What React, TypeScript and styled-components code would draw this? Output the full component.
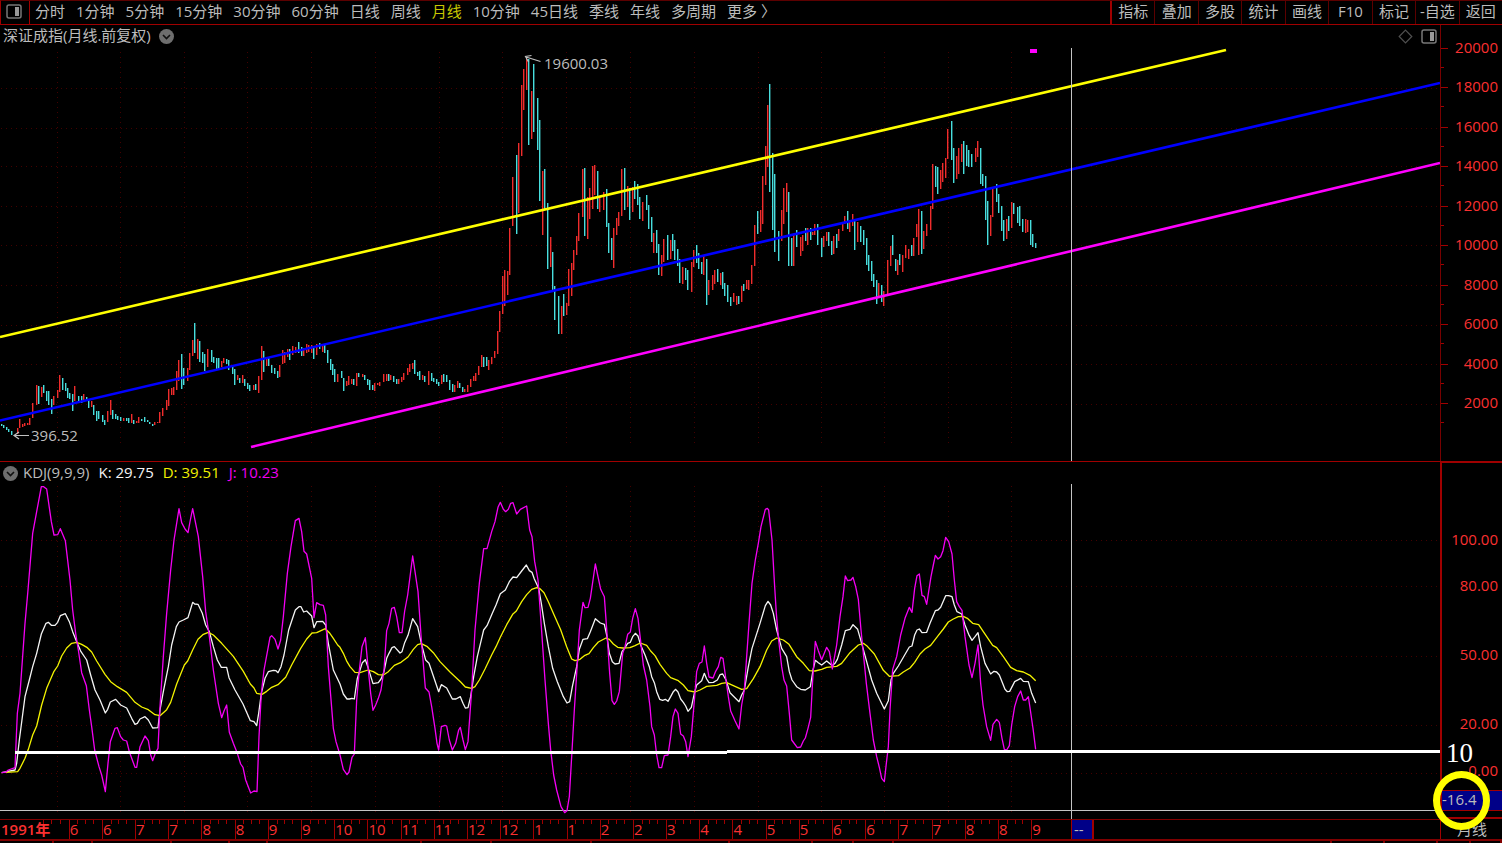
import React from "react";
import styled, { createGlobalStyle } from "styled-components";

const GlobalStyle = createGlobalStyle`
  * { box-sizing: border-box; }
  body {
    margin: 0;
    background: #000;
    color: #bcbcbc;
    font: 15px/20px "Open Sans", "Noto Sans CJK SC", sans-serif;
  }
`;

const palette = {
  edge: "#a00000",
  edgeDim: "#5c0000",
  grid: "#440000",
  scale: "#fa3030",
  muted: "#bcbcbc",
  yellow: "#ffff00",
  blue: "#0000ff",
  magenta: "#ff00ff",
  tag: "#000088",
};

/* ---------- toolbar ---------- */

const Toolbar = styled.nav`
  display: flex;
  align-items: stretch;
  height: 25px;
  border-top: 1px solid ${palette.edgeDim};
  border-bottom: 1px solid ${palette.edge};
  border-left: 1px solid ${palette.edge};
`;

const LayoutButton = styled.button`
  display: flex;
  align-items: center;
  justify-content: center;
  width: 29px;
  padding: 0 3px 3px 0;
  border: 0;
  border-right: 1px solid ${palette.edge};
  background: none;
`;

const PeriodList = styled.div`
  display: flex;
  flex: 1;
  gap: 11px;
  padding-left: 5px;
`;

const PeriodButton = styled.button<{ $active?: boolean }>`
  padding: 0 0 3px;
  border: 0;
  background: none;
  color: ${(p) => (p.$active ? "#c8c800" : palette.muted)};
  font: inherit;
  white-space: nowrap;
`;

const ToolList = styled.div`
  display: grid;
  grid-template-columns: repeat(9, 1fr);
  width: 392px;
  border-left: 1px solid ${palette.edge};
`;

const ToolButton = styled.button`
  padding: 0 0 3px;
  border: 0;
  border-left: 1px solid ${palette.edgeDim};
  background: none;
  color: ${palette.muted};
  font: inherit;
  white-space: nowrap;
  &:first-child { border-left-color: ${palette.edge}; }
`;

/* ---------- chart panels ---------- */

const Panel = styled.section<{ $divided?: boolean }>`
  display: grid;
  grid-template-columns: minmax(0, 1fr) 62px;
  border-top: ${(p) => (p.$divided ? `1px solid ${palette.edge}` : "0")};
`;

const PanelHeader = styled.header<{ $tall?: boolean }>`
  display: flex;
  align-items: center;
  height: ${(p) => (p.$tall ? 23 : 22)}px;
  padding: 0 3px;
  white-space: nowrap;
`;

const PanelTitle = styled.h1`
  margin: 0 8px 0 0;
  padding-bottom: 3px;
  font: inherit;
`;

const IconButton = styled.button`
  display: flex;
  margin: 0;
  padding: 0;
  border: 0;
  background: none;
`;

const HeaderIcons = styled.div`
  display: flex;
  gap: 8px;
  margin-left: auto;
`;

const IndicatorLegend = styled.div`
  display: flex;
  gap: 9px;
  margin-left: 5px;
  padding-bottom: 3px;
`;

const Reading = styled.span<{ $color: string }>`
  color: ${(p) => p.$color};
`;

const Plot = styled.svg`
  display: block;
  width: 100%;
  height: auto;
`;

const PriceScale = styled.ol`
  display: grid;
  grid-auto-rows: 1fr;
  margin: 0;
  padding: 3px 0 38px;
  border-left: 1px solid #780000;
  list-style: none;
  color: ${palette.scale};
`;

const PriceMark = styled.li`
  display: flex;
  align-items: center;
  justify-content: space-between;
  padding-right: 4px;
  padding-bottom: 2px;
  background: linear-gradient(${palette.edge}, ${palette.edge}) 0 100% / 3px 1px no-repeat;
  &::before {
    content: "";
    width: 7px;
    height: 1px;
    margin-top: 3px;
    background: ${palette.edge};
  }
`;

const OscillatorScale = styled.ol`
  position: relative;
  display: grid;
  grid-template-rows: 46fr 46fr 94fr 44fr 50fr;
  margin: 0;
  padding: 53px 4px 22px 0;
  border-top: 1px solid ${palette.edge};
  border-left: 2px solid ${palette.edge};
  border-bottom: 2px solid ${palette.edge};
  list-style: none;
  color: ${palette.scale};
  text-align: right;
`;

const OscillatorMark = styled.li`
  display: flex;
  align-items: center;
  justify-content: flex-end;
`;

const LevelNote = styled.li`
  position: absolute;
  left: 4px;
  bottom: 49px;
  color: #fff;
  font: 27px/30px "Liberation Serif", serif;
`;

const CursorTag = styled.li`
  position: absolute;
  left: 0;
  right: 0;
  bottom: 6px;
  height: 21px;
  border: solid ${palette.edge};
  border-width: 1px 0;
  background: ${palette.tag};
  color: ${palette.muted};
  line-height: 17px;
  text-align: left;
`;

const Highlight = styled.li`
  position: absolute;
  left: -9px;
  bottom: -13px;
  z-index: 1;
  width: 57px;
  height: 59px;
  border: 7px solid ${palette.yellow};
  border-radius: 50%;
`;

/* ---------- time axis ---------- */

const TimeRow = styled.footer`
  display: grid;
  grid-template-columns: minmax(0, 1fr) 62px;
  height: 22px;
  border-bottom: 2px solid #800000;
`;

const TimeScale = styled.ol`
  display: grid;
  grid-template-columns: 207fr repeat(29, 100fr) 120fr 70fr 1042fr;
  margin: 0;
  padding: 0;
  border-top: 1px solid #800000;
  list-style: none;
  color: ${palette.scale};
  line-height: 18px;
`;

const tick = `linear-gradient(${palette.edge}, ${palette.edge})`;

const TimeCell = styled.li<{ $ticks?: boolean }>`
  min-width: 0;
  border-left: 1px solid ${palette.edge};
  background: ${(p) =>
    p.$ticks
      ? `${tick} 25% 0 / 1px 4px no-repeat, ${tick} 50% 0 / 1px 4px no-repeat, ${tick} 75% 0 / 1px 4px no-repeat`
      : "none"};
`;

const YearCell = styled.li`
  padding-left: 1px;
  background: ${tick} 64% 0 / 1px 4px no-repeat, ${tick} 76% 0 / 1px 4px no-repeat,
    ${tick} 88% 0 / 1px 4px no-repeat;
  font-weight: 600;
  white-space: nowrap;
`;

const CursorCell = styled.li`
  padding-left: 2px;
  border: solid ${palette.edge};
  border-width: 0 2px 0 1px;
  background: ${palette.tag};
  color: ${palette.muted};
`;

const PeriodLabel = styled.div`
  padding-left: 16px;
  border-left: 1px solid ${palette.edge};
`;

const StatusStrip = styled.div`
  display: flex;
  height: 2px;
`;

const StatusCell = styled.div<{ $share: number }>`
  flex: ${(p) => p.$share} 0 0;
  border-right: 2px solid #800000;
`;

/* ---------- data ---------- */

const periods = ["分时", "1分钟", "5分钟", "15分钟", "30分钟", "60分钟", "日线", "周线", "月线", "10分钟", "45日线", "季线", "年线", "多周期", "更多 〉"];
const tools = ["指标", "叠加", "多股", "统计", "画线", "F10", "标记", "-自选", "返回"];
const prices = [20000, 18000, 16000, 14000, 12000, 10000, 8000, 6000, 4000, 2000];
const levels = ["100.00", "80.00", "50.00", "20.00", "0.00"];
const months = [6, 6, 7, 7, 8, 8, 9, 9, 10, 10, 11, 11, 12, 12, 1, 1, 2, 2, 3, 4, 4, 5, 5, 6, 6, 7, 7, 8, 8];
const statusShares = [53, 38, 79, 57, 37, 155, 70, 100, 140, 82, 40, 39, 446, 52, 53, 31, 30];

const gridX = [57, 120, 184, 247, 311, 375, 439, 502, 566, 630, 694, 758, 821, 884, 948, 1011];

/* Series are kept in thirds of a plot unit, in blocks that each have an origin. */
type Block = { x: number; y: number; data: string };

const bars: Block[] = [
  {
    x: 0,
    y: 756,
    data: `c5,373,379 c12,376,385 c19,382,390 c26,387,397 c34,394,405 r53,384,402 r60,357,385 r68,372,382 r75,369,378 r83,368,376 r90,353,375 r98,309,355 r109,256,315 c117,258,312 r124,261,290 c132,254,280 c139,274,302 c147,274,315 c154,297,342 r162,289,314 r173,270,294 r180,226,277 c188,234,270 c196,248,273 c203,265,293 c210,280,297 c218,282,333 r225,259,304 c236,288,302 c244,289,308 r252,281,302 c260,290,304 c267,296,324 r275,304,320 c282,315,344 c290,333,363 c297,333,357 c308,346,366 c315,359,375 r323,332,366 r331,300,345 c338,330,356 c346,342,357 c353,348,360 c361,350,363 r372,355,363 c379,354,362 c387,354,370 r394,342,370 c402,361,372 r409,364,370 r416,350,369 c424,358,364 c435,352,366 c443,359,367 c450,365,373 c458,371,378 r465,365,375 r473,366,370 r480,335,370 r488,323,349 r499,301,330 r506,267,318 r514,263,285 r522,260,285 r529,213,269 r537,180,243 c544,162,266 c551,205,255 r562,205,244 r570,159,209 r578,121,168 c585,69,159 r593,117,176 c600,123,187 c607,157,190 c615,162,214 r623,147,202 c634,150,186 c641,171,190 c649,175,208 c656,173,206 r664,183,201 r672,173,190 c679,177,193 c687,180,210 c698,196,222 c705,206,255 r712,225,240 c720,233,250 r728,225,250 c735,237,258 c743,250,268 c750,256,273 r761,254,270 c768,252,270 r776,229,280 r784,139,239 c791,153,216 r799,174,199 c806,174,198 c814,196,219 c825,203,222 c833,213,235 r840,195,232 r848,150,193 r855,157,190 r863,148,170 c870,147,180 r878,139,164 r886,142,160 c896,127,158 c904,142,168 r911,145,168 r919,132,158 r927,136,156 r934,136,160 c942,139,176 r949,133,165 c960,129,148 r968,134,155 c975,136,158 c983,150,190 c991,178,210 c998,193,224 c1005,207,246 r1013,222,246 c1024,213,235 c1032,233,273 r1040,243,258 r1047,229,255`,
  },
  {
    x: 1020,
    y: 456,
    data: `r34,537,552 c42,537,555 r49,518,558 c56,518,531 r68,521,530 c75,525,540 c83,537,555 c90,540,570 c98,555,571 r105,549,573 r113,548,556 r120,545,558 r131,521,546 r139,521,543 c146,521,543 r153,525,541 c161,528,546 c169,537,552 r177,537,552 r184,530,546 r191,518,541 r202,503,525 r210,492,515 r218,488,508 c225,480,522 c232,515,528 c240,513,540 r247,526,540 c255,528,546 r266,513,555 c274,518,543 c281,533,546 c289,537,552 c296,545,558 r304,525,552 c311,522,546 c319,525,546 c330,540,570 c338,552,576 r345,555,576 r352,543,564 c360,548,564 c368,561,576 r375,567,576 r382,555,577 r393,537,562 r401,529,542 r408,518,543 r416,498,525 r424,465,501 c431,470,501 c439,470,498 r446,480,510 r454,472,492 r465,453,475 r472,393,461 r480,333,396 r488,228,342 r495,210,318 r502,213,285 r510,84,225 c638,157,271 c645,258,360 c656,288,402 r664,318,402 c672,282,348 r679,308,345 r687,206,318 r694,188,288 r701,150,209 r709,108,165 r717,38,123 c957,131,225 r964,165,228 r972,117,187 c983,105,179 r991,120,176 c998,102,153 c1005,120,180 c1013,147,198 c1020,178,250 r1028,202,252 c1036,203,240 c1043,210,270`,
  },
  {
    x: 1500,
    y: -24,
    data: `r37,412,558 c49,345,581 r56,309,520 r64,135,348 r72,87,209 r79,57,150 c86,57,315 r94,153,297 c101,72,276 c112,173,330 c120,240,483 r128,394,585 c135,387,510 c143,488,686 r151,590,682 r248,387,531 c255,384,588 r263,470,596 r270,443,536 r278,379,507 r285,375,465 c293,393,506 r300,472,516 r312,457,510 c319,447,562 c326,548,640 c334,594,660 r342,563,683 r349,533,584 r356,515,557 r364,387,529 c375,384,510 r382,438,502 c390,445,540 r397,442,516 c405,423,476 c413,432,494 c420,472,537 r428,487,543 c439,465,511 c446,495,567 c454,530,607 r462,578,640 c470,570,640`,
  },
  {
    x: 2040,
    y: 66,
    data: `r34,577,667 r42,541,590 c49,526,578 c57,548,596 c65,577,611 r72,559,614 c79,568,705 r87,630,675 r98,614,660 r105,600,641 c113,597,637 r121,608,644 c128,606,656 c135,638,678 c143,645,697 c151,680,708 r162,669,697 r169,679,705 c177,678,701 r184,649,696 c192,642,663 r199,630,656 r207,630,660 r214,585,641 r225,465,588 c233,423,492 r241,420,487 r248,318,462 r256,228,345 r263,105,291 c270,42,366 c278,249,480 c285,312,546 c297,484,573 r304,420,513 r312,353,462 r320,338,425 c327,367,588 c334,503,588 r342,495,588 c349,480,531 r361,500,558 r368,495,543 c376,473,514 r383,473,525 c391,473,510 r398,487,495 r405,462,496 c413,462,525 c424,503,562 r432,499,531 r440,487,514 c447,486,528 c454,514,555 r462,497,552 c469,491,533 r477,477,513 r488,456,484 r495,438,463 c503,423,477 r510,455,487 r518,432,468 c525,450,540 r533,455,516 c541,468,516 c552,480,525 c559,503,585 c567,555,603 c574,573,634 c582,612,652 c589,630,702 r597,638,684 c604,645,697 r612,663,708 r623,570,672 r631,528,588 c638,495,555 c646,566,603 r653,570,614 c660,552,585 r668,555,607 r676,526,565 r687,537,567 c694,526,558 r702,503,558 r710,461,502 r717,417,555 c724,423,552 r732,484,536 r740,461,498 r751,408,480 r758,282,416 c766,288,351 c773,291,371 r781,300,356 r789,279,336 r796,263,325 r804,177,266 c814,153,270 c822,233,338 r829,258,327 r837,233,312 r844,221,277 c852,213,312 c859,225,288 c867,240,291 c874,251,291 r886,233,277 r893,213,262 c901,233,342 c908,312,348 c916,318,450 c923,393,525 r931,435,498 r938,354,441 c949,341,396 c957,372,428 c964,408,483 c972,450,514 r979,447,507 c987,438,483 r994,395,475 c1002,398,432 c1013,412,459 c1020,408,468 c1028,447,487 r1036,447,489 r1044,450,487 c1051,450,525 c1059,492,532 c1066,518,535`,
  },
];

const jLine: Block[] = [
  {
    x: 0,
    y: -12,
    data: `5,878 18,876 25,870 45,863 52,700 60,640 75,430 84,330 98,160 110,95 124,20 131,20 140,27 154,125 162,165 173,164 181,146 196,182 210,300 218,390 227,460 235,510 245,578 259,617 268,690 275,740 284,810 297,860 305,885 316,935 324,850 331,785 345,745 352,743 362,770 370,780 380,783 388,815 405,862 410,862 420,800 435,768 445,782 452,825 458,842 466,820 474,805 480,680 490,530 500,400 512,270 522,180 537,86 545,128 555,147 564,158 571,120 578,86 595,170 608,290 617,395 628,470 640,570 655,670 665,713 672,693 680,675 688,757 700,790 712,820 722,852 729,862 737,900 752,939 762,933 771,935 777,770 784,640 792,570 804,505 810,472 815,467 825,478 834,507 842,480 850,410 862,280 873,200 886,122 897,115 905,155 912,214 920,222 935,295 942,413 950,368 960,374 970,376 977,405 985,560 1000,745 1008,785 1020,825`,
  },
  {
    x: 1020,
    y: -12,
    data: `10,868 21,884 27,876 36,832 43,822 50,660 58,570 66,500 76,473 84,560 92,640 99,691 107,675 115,655 123,630 132,570 140,452 147,430 155,385 163,382 170,410 178,458 186,458 194,393 203,345 218,228 234,335 244,480 256,624 267,636 275,680 285,745 291,790 296,810 304,740 315,736 320,738 328,780 337,810 347,790 356,750 361,742 369,780 376,809 384,785 395,630 405,450 418,310 431,206 441,206 455,155 465,125 474,82 481,67 490,88 497,95 505,88 512,70 519,68 530,102 541,88 560,78 569,150 576,170 584,245 594,300 604,440 615,600 625,730 632,810 641,885 650,930 663,980 674,998 681,992 688,950 695,830 703,690 712,550 718,450 729,367 735,383 744,382 751,355 766,252 782,328 793,350 801,460 809,580 816,662 823,673 830,663 838,635 848,520 855,500 863,463 871,456 878,415 886,386 894,415 901,475 910,555 920,600 930,680 935,740 943,765 950,825 957,863 965,863 973,827 984,825 992,770 999,710 1006,687 1014,700 1022,762 1030,768 1037,785 1044,830`,
  },
  {
    x: 2040,
    y: -12,
    data: `34,770 44,650 50,575 58,550 66,546 73,498 80,550 87,591 99,594 107,574 115,560 122,532 129,535 138,600 145,650 152,693 165,722 177,747 185,675 193,630 200,530 207,430 216,310 226,240 235,190 243,140 256,88 262,85 266,90 276,180 284,320 289,400 296,480 305,560 312,600 320,618 328,700 335,780 352,803 362,801 370,783 376,774 384,745 392,712 398,600 406,484 415,512 425,539 440,502 448,515 457,567 470,495 480,410 489,350 496,288 503,302 513,300 519,292 527,320 535,358 543,450 551,530 559,610 570,700 580,780 590,830 598,862 605,895 613,905 619,850 625,800 630,690 638,568 650,530 662,465 675,415 688,382 696,397 704,325 711,287 718,282 726,346 733,350 740,373 753,290 760,255 766,226 774,237 782,230 789,212 797,172 806,185 816,222 823,300 830,365 838,380 846,391 855,470 867,555 876,593 885,550 894,495 902,610 909,675 920,740 932,781 939,733 950,718 958,727 966,775 973,808 980,810 988,797 995,735 1004,680 1013,650 1022,633 1030,660 1037,660 1045,650 1051,690 1059,745 1067,808`,
  },
];

const kLine: Block[] = [
  {
    x: 0,
    y: -12,
    data: `5,878 45,870 50,850 58,780 75,650 88,600 98,560 110,520 124,462 138,430 145,427 154,436 165,436 173,427 181,407 196,401 208,425 218,455 230,485 243,515 260,540 272,585 285,630 300,660 316,699 323,688 331,666 347,658 362,675 380,684 395,715 405,733 412,730 420,717 435,710 445,720 458,744 474,743 480,690 490,635 505,560 515,495 529,440 537,426 550,420 564,413 571,390 578,367 584,372 594,373 607,400 617,435 628,455 640,500 652,540 664,562 680,562 687,593 705,630 729,672 751,722 762,725 770,737 776,700 784,640 795,595 805,575 820,571 828,572 834,578 843,560 852,525 866,450 886,390 897,380 903,380 911,396 920,393 935,408 942,443 950,425 968,424 977,435 985,490 1000,570 1020,612`,
  },
  {
    x: 1020,
    y: -12,
    data: `10,642 21,657 28,657 36,655 43,657 52,595 60,570 67,548 76,539 84,562 99,611 115,608 123,597 132,575 140,535 147,520 156,503 163,500 180,519 186,515 194,488 204,466 218,416 233,440 244,490 257,540 267,550 280,588 296,635 304,614 320,624 337,657 348,657 361,650 369,670 376,684 384,683 392,650 401,590 412,530 425,475 431,450 441,437 457,400 468,375 481,341 496,330 508,305 519,291 530,293 545,273 559,255 568,272 576,277 583,297 596,325 604,370 613,430 625,500 638,565 652,605 670,650 681,669 689,665 697,620 710,560 718,508 729,478 742,476 751,455 766,416 781,429 793,433 801,470 808,520 817,545 825,552 837,550 846,515 855,503 863,490 871,487 878,470 886,460 894,468 902,495 915,525 928,560 935,590 943,608 950,635 959,658 968,661 976,658 984,664 992,650 1000,635 1007,628 1014,636 1022,657 1030,667 1037,678 1044,694`,
  },
  {
    x: 2040,
    y: -12,
    data: `34,682 43,640 50,615 65,602 73,580 80,597 87,608 100,607 112,600 120,584 128,582 138,600 150,638 165,653 177,665 185,645 193,630 205,560 216,505 240,430 256,377 264,364 272,375 280,400 290,450 305,505 320,530 328,575 336,600 350,620 362,628 376,630 391,620 399,570 406,541 415,548 425,555 440,543 457,557 465,550 472,538 485,495 496,452 510,448 519,434 533,448 545,490 560,545 575,600 590,640 613,687 625,662 633,600 640,580 655,558 674,525 688,501 696,498 704,465 711,450 718,447 726,458 740,457 750,430 766,392 774,390 782,382 797,347 806,347 816,350 823,375 831,395 845,402 855,435 866,463 876,481 885,470 894,458 902,500 915,550 932,582 942,574 950,576 958,585 975,628 982,635 989,634 1004,605 1022,595 1030,604 1045,605 1055,640 1067,669`,
  },
];

const dLine: Block[] = [
  {
    x: 0,
    y: -12,
    data: `18,877 53,875 60,865 75,835 85,808 98,765 110,738 125,675 140,625 162,574 173,558 185,528 200,504 215,490 230,487 245,493 262,503 275,516 290,543 315,583 332,605 352,620 380,637 405,667 425,681 445,689 465,704 480,707 500,689 512,667 530,612 553,555 563,543 578,510 594,478 610,463 625,457 640,465 665,490 700,529 730,574 751,612 762,624 770,640 786,643 800,634 815,622 834,614 857,592 875,555 902,505 920,477 936,459 950,458 976,446 988,458 1000,475 1013,495`,
  },
  {
    x: 1020,
    y: -12,
    data: `0,502 10,520 21,545 30,560 45,577 60,578 84,570 100,575 115,584 130,585 145,575 163,556 183,547 204,531 220,508 233,494 244,491 262,500 280,518 300,545 330,576 362,606 376,621 395,625 405,620 418,600 435,567 455,525 468,500 481,472 500,434 518,403 529,393 545,365 560,344 575,328 590,323 600,326 612,338 625,365 640,400 662,449 680,500 695,537 705,542 720,538 733,527 747,521 760,503 775,486 798,474 808,478 820,492 833,502 848,504 870,503 885,497 901,489 920,496 932,513 945,527 960,553 980,580 992,593 1015,602 1030,615`,
  },
  {
    x: 2040,
    y: -12,
    data: `24,632 45,636 60,630 80,619 110,616 125,610 140,608 160,617 185,628 200,626 220,596 240,560 260,510 275,483 290,474 310,480 327,493 350,530 370,550 388,572 405,573 425,568 440,562 470,559 485,550 510,518 535,495 550,490 562,499 583,522 610,571 628,589 655,587 670,576 690,564 704,547 720,522 735,507 752,496 775,466 790,447 805,426 820,417 835,410 850,409 862,415 878,430 896,434 910,455 938,496 950,503 970,530 992,562 1010,572 1030,576 1050,586 1067,602`,
  },
];

const linePoints = (blocks: Block[]) =>
  blocks
    .flatMap((b) =>
      b.data.split(" ").map((pair) => {
        const [x, y] = pair.split(",").map(Number);
        return `${(b.x + x) / 3},${(b.y + y) / 3}`;
      })
    )
    .join(" ");

const barPath = (kind: "r" | "c") =>
  bars
    .flatMap((b) =>
      b.data
        .split(" ")
        .filter((bar) => bar[0] === kind)
        .map((bar) => {
          const [x, top, bottom] = bar.slice(1).split(",").map(Number);
          const left = Math.floor((b.x + x - 1) / 3);
          return `M${left + 0.7} ${Math.round((b.y + top) / 3)}V${Math.round((b.y + bottom) / 3)}`;
        })
    )
    .join("");

/* ---------- drawings ---------- */

const PanelIcon = () => (
  <svg width="16" height="15" viewBox="0 0 16 15" aria-hidden="true">
    <rect x="1" y="1" width="14" height="13" rx="2" fill="none" stroke="#777" strokeWidth="1.5" />
    <rect x="9" y="3" width="4" height="9" fill="#999" />
  </svg>
);

const DiamondIcon = () => (
  <svg width="15" height="15" viewBox="0 0 15 15" aria-hidden="true">
    <path d="M7.5 1.2L13.8 7.5L7.5 13.8L1.2 7.5Z" fill="none" stroke="#505050" strokeWidth="1.2" />
  </svg>
);

const ChevronDisc = () => (
  <svg width="15" height="15" viewBox="0 0 15 15" aria-hidden="true">
    <circle cx="7.5" cy="7.5" r="7.5" fill="#6e6e6e" />
    <path d="M4 6L7.5 9.5L11 6" fill="none" stroke="#101010" strokeWidth="1.6" />
  </svg>
);

const GridLines = ({ rows, top, bottom }: { rows: number[]; top: number; bottom: number }) => (
  <g stroke={palette.grid} strokeWidth="1" strokeDasharray="1 4">
    {rows.map((y) => (
      <line key={`h${y}`} x1="1" x2="1438" y1={y + 0.5} y2={y + 0.5} />
    ))}
    {gridX.map((x) => (
      <line key={`v${x}`} x1={x + 0.5} x2={x + 0.5} y1={top} y2={bottom} />
    ))}
  </g>
);

const PricePlot = () => (
  <Plot viewBox="0 0 1440 413" role="img" aria-label="深证成指 月线">
    <GridLines rows={[40, 80, 118, 158, 197, 237, 277, 316, 356]} top={4} bottom={396} />
    <path d={barPath("r")} stroke="#f02c2c" strokeWidth="1.4" fill="none" />
    <path d={barPath("c")} stroke="#48dede" strokeWidth="1.4" fill="none" />
    <g strokeWidth="2.6">
      <line x1="0" y1="289" x2="1226" y2="2" stroke={palette.yellow} />
      <line x1="0" y1="372.5" x2="1440" y2="35" stroke={palette.blue} />
      <line x1="251" y1="399" x2="1440" y2="115" stroke={palette.magenta} />
    </g>
    <rect x="1030" y="1" width="7" height="4" fill={palette.magenta} />
    <g stroke="#c0c0c0" strokeWidth="1.2" fill="none">
      <path d="M540.5 13.5L526 9M531.5 7.5L525.5 8.5L528.5 14" />
      <path d="M29 387.5H14M19 384L14 387.5L19 391" />
    </g>
    <g fill={palette.muted} fontSize="15">
      <text x="544" y="21">19600.03</text>
      <text x="31" y="393">396.52</text>
    </g>
    <line x1="1071.5" y1="0" x2="1071.5" y2="413" stroke="#c4c4c4" />
  </Plot>
);

const OscillatorPlot = () => (
  <Plot viewBox="0 0 1440 335" role="img" aria-label="KDJ">
    <GridLines rows={[56, 102, 172, 241, 289]} top={2} bottom={332} />
    <line x1="0" y1="326.5" x2="1440" y2="326.5" stroke="#c4c4c4" />
    <line x1="1071.5" y1="0" x2="1071.5" y2="335" stroke="#c4c4c4" />
    <g fill="none" strokeWidth="1.3" strokeLinejoin="round">
      <polyline points={linePoints(kLine)} stroke="#f4f4f4" />
      <polyline points={linePoints(dLine)} stroke="#f4f400" />
      <polyline points={linePoints(jLine)} stroke="#f400f4" />
    </g>
    <path d="M15 268.5H727M727 267.5H1440" stroke="#fff" strokeWidth="3" />
  </Plot>
);

export default function App() {
  return (
    <>
      <GlobalStyle />
      <Toolbar>
        <LayoutButton aria-label="布局">
          <PanelIcon />
        </LayoutButton>
        <PeriodList>
          {periods.map((p) => (
            <PeriodButton key={p} $active={p === "月线"}>
              {p}
            </PeriodButton>
          ))}
        </PeriodList>
        <ToolList>
          {tools.map((t) => (
            <ToolButton key={t}>{t}</ToolButton>
          ))}
        </ToolList>
      </Toolbar>

      <main>
        <Panel>
          <div>
            <PanelHeader $tall>
              <PanelTitle>深证成指(月线.前复权)</PanelTitle>
              <IconButton aria-label="展开">
                <ChevronDisc />
              </IconButton>
              <HeaderIcons>
                <IconButton aria-label="标记">
                  <DiamondIcon />
                </IconButton>
                <IconButton aria-label="侧栏">
                  <PanelIcon />
                </IconButton>
              </HeaderIcons>
            </PanelHeader>
            <PricePlot />
          </div>
          <PriceScale>
            {prices.map((p) => (
              <PriceMark key={p}>{p}</PriceMark>
            ))}
          </PriceScale>
        </Panel>

        <Panel $divided>
          <div>
            <PanelHeader>
              <IconButton aria-label="展开">
                <ChevronDisc />
              </IconButton>
              <IndicatorLegend>
                <span>KDJ(9,9,9)</span>
                <Reading $color="#f4f4f4">K: 29.75</Reading>
                <Reading $color="#f0f000">D: 39.51</Reading>
                <Reading $color="#f000f0">J: 10.23</Reading>
              </IndicatorLegend>
            </PanelHeader>
            <OscillatorPlot />
          </div>
          <OscillatorScale>
            {levels.map((l) => (
              <OscillatorMark key={l}>{l}</OscillatorMark>
            ))}
            <LevelNote>10</LevelNote>
            <CursorTag>-16.4</CursorTag>
            <Highlight aria-hidden="true" />
          </OscillatorScale>
        </Panel>
      </main>

      <TimeRow>
        <TimeScale>
          <YearCell>1991年</YearCell>
          {months.map((m, i) => (
            <TimeCell key={i} $ticks>
              {m}
            </TimeCell>
          ))}
          <TimeCell>9</TimeCell>
          <CursorCell>--</CursorCell>
        </TimeScale>
        <PeriodLabel>月线</PeriodLabel>
      </TimeRow>
      <StatusStrip>
        {statusShares.map((s, i) => (
          <StatusCell key={i} $share={s} />
        ))}
      </StatusStrip>
    </>
  );
}
